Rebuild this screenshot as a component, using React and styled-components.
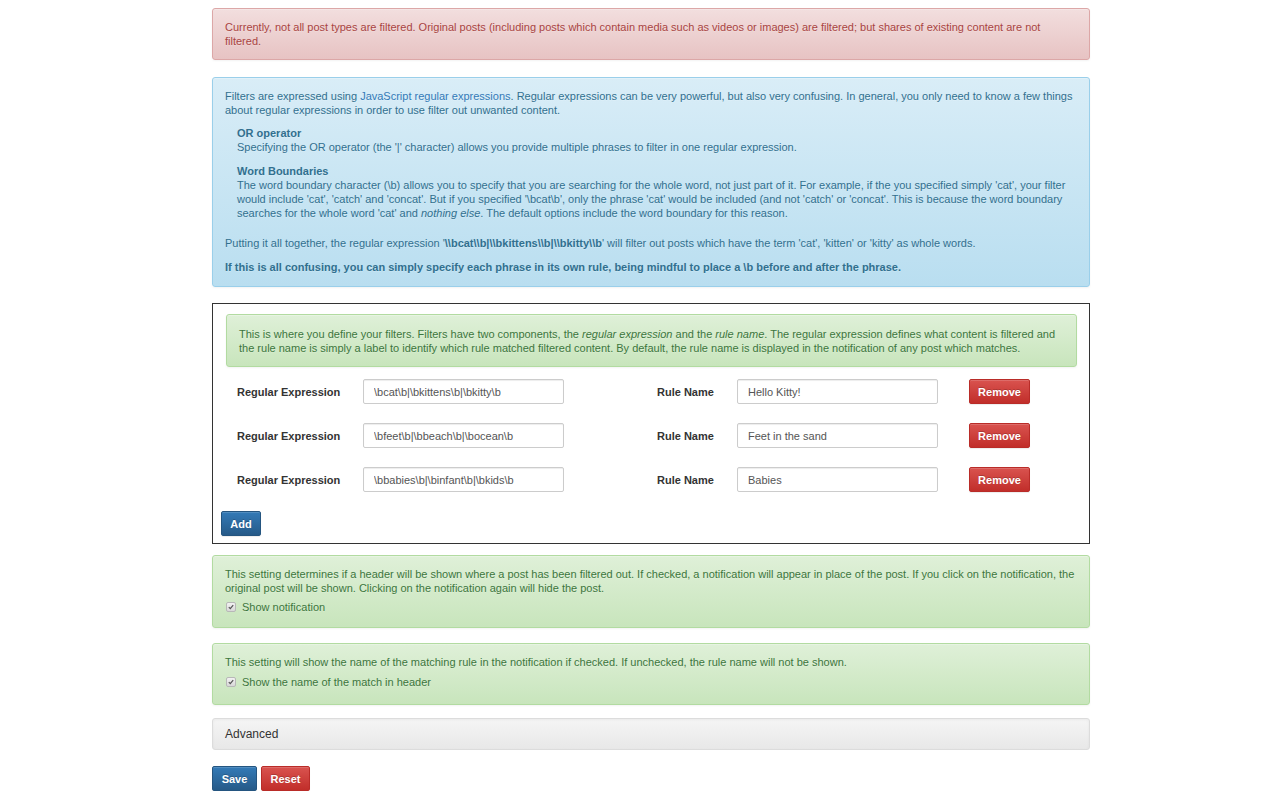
import React from "react";
import styled, { createGlobalStyle, css } from "styled-components";

const GlobalStyle = createGlobalStyle`
  html, body {
    margin: 0;
    padding: 0;
    background: #fff;
  }
  body {
    font-family: "Liberation Sans", Arial, Helvetica, sans-serif;
    font-size: 11px;
    line-height: 14px;
    color: #333;
  }
`;

const Page = styled.div`
  width: 878px;
  margin-left: 212px;
  padding-top: 8px;
`;

const tones = {
  danger: css`
    color: #a94442;
    background-image: linear-gradient(to bottom, #f2dede 0%, #e7c3c3 100%);
    border-color: #dca7a7;
  `,
  info: css`
    color: #31708f;
    background-image: linear-gradient(to bottom, #d9edf7 0%, #b9def0 100%);
    border-color: #9acfea;
  `,
  success: css`
    color: #3c763d;
    background-image: linear-gradient(to bottom, #dff0d8 0%, #c8e5bc 100%);
    border-color: #b2dba1;
  `,
};

const Alert = styled.div`
  border: 1px solid;
  border-radius: 3px;
  padding: ${(p) => p.$pad || "11px 12px 12px"};
  margin-bottom: ${(p) => p.$mb || 0}px;
  box-shadow: inset 0 1px 0 rgba(255, 255, 255, 0.25), 0 1px 2px rgba(0, 0, 0, 0.05);
  text-shadow: 0 1px 0 rgba(255, 255, 255, 0.2);
  ${(p) => tones[p.$tone]}
`;

const IntroAlert = styled(Alert)`
  margin-left: 5px;
`;

const Para = styled.p`
  margin: 0 0 ${(p) => p.$mb || 0}px;
  font-weight: ${(p) => (p.$bold ? "bold" : "normal")};
`;

const Link = styled.a`
  color: #337ab7;
  text-decoration: none;
`;

const Terms = styled.dl`
  margin: 9px 0 16px;
  padding-left: 12px;
`;

const Term = styled.dt`
  font-weight: bold;
  font-size: 11px;
`;

const Desc = styled.dd`
  margin: 0 0 ${(p) => p.$mb || 0}px;
`;

const Code = styled.b`
  font-weight: bold;
`;

const RulesBox = styled.div`
  border: 1px solid #333;
  padding: 10px 12px 7px 8px;
  margin-bottom: 11px;
`;

const Rows = styled.div`
  padding: 12px 0 19px 16px;
  display: flex;
  flex-direction: column;
  gap: 19px;
`;

const Row = styled.div`
  display: grid;
  grid-template-columns: 126px 201px 93px 80px 201px 31px 61px;
  align-items: center;
  height: 25px;
`;

const Label = styled.label`
  font-weight: bold;
  color: #333;
`;

const Input = styled.input`
  box-sizing: border-box;
  width: 201px;
  height: 25px;
  padding: 0 10px;
  font-family: inherit;
  font-size: 11px;
  color: #555;
  border: 1px solid #ccc;
  border-radius: 2px;
  box-shadow: inset 0 1px 1px rgba(0, 0, 0, 0.075);
  background: #fff;
  outline: none;
`;

const btnTones = {
  primary: css`
    background-image: linear-gradient(to bottom, #337ab7 0%, #265a88 100%);
    border-color: #245580;
  `,
  danger: css`
    background-image: linear-gradient(to bottom, #d9534f 0%, #c12e2a 100%);
    border-color: #b92c28;
  `,
};

const Button = styled.button`
  box-sizing: border-box;
  height: 25px;
  width: ${(p) => p.$w}px;
  padding: 0;
  font-family: inherit;
  font-size: 11px;
  font-weight: bold;
  color: #fff;
  border: 1px solid;
  border-radius: 2px;
  text-shadow: 0 -1px 0 rgba(0, 0, 0, 0.2);
  box-shadow: inset 0 1px 0 rgba(255, 255, 255, 0.15), 0 1px 1px rgba(0, 0, 0, 0.075);
  cursor: pointer;
  ${(p) => btnTones[p.$tone]}
`;

const CheckRow = styled.label`
  display: flex;
  align-items: center;
  gap: 6px;
  margin-top: ${(p) => p.$mt}px;
  padding-left: 1px;
`;

const Box = styled.span`
  width: 8px;
  height: 8px;
  border: 1px solid #b8b8b8;
  border-radius: 2px;
  background: linear-gradient(to bottom, #f2f2f2, #d8d8d8);
  display: flex;
  align-items: center;
  justify-content: center;
`;

const Well = styled.div`
  height: 30px;
  display: flex;
  align-items: center;
  padding: 0 12px;
  font-size: 12px;
  color: #333;
  border: 1px solid #dcdcdc;
  border-radius: 3px;
  background-image: linear-gradient(to bottom, #f5f5f5 0%, #e8e8e8 100%);
  box-shadow: inset 0 1px 3px rgba(0, 0, 0, 0.05), 0 1px 0 rgba(255, 255, 255, 0.1);
  margin-bottom: 16px;
`;

const Actions = styled.div`
  display: flex;
  gap: 4px;
`;

const rules = [
  { re: "\\bcat\\b|\\bkittens\\b|\\bkitty\\b", name: "Hello Kitty!" },
  { re: "\\bfeet\\b|\\bbeach\\b|\\bocean\\b", name: "Feet in the sand" },
  { re: "\\bbabies\\b|\\binfant\\b|\\bkids\\b", name: "Babies" },
];

function Check({ children, mt }) {
  return (
    <CheckRow $mt={mt}>
      <Box>
        <svg width="6" height="6" viewBox="0 0 6 6">
          <path d="M0.8 3.2 L2.3 4.7 L5.2 1.2" stroke="#555" strokeWidth="1.2" fill="none" />
        </svg>
      </Box>
      {children}
    </CheckRow>
  );
}

export default function App() {
  return (
    <>
      <GlobalStyle />
      <Page>
        <Alert $tone="danger" $mb={17} $pad="11px 12px 11px">
          Currently, not all post types are filtered. Original posts (including posts which contain media such as
          videos or images) are filtered; but shares of existing content are not filtered.
        </Alert>

        <Alert $tone="info" $mb={16}>
          <Para>
            Filters are expressed using <Link href="#">JavaScript regular expressions</Link>. Regular expressions can
            be very powerful, but also very confusing. In general, you only need to know a few things about regular
            expressions in order to use filter out unwanted content.
          </Para>
          <Terms>
            <Term>OR operator</Term>
            <Desc $mb={10}>
              Specifying the OR operator (the '|' character) allows you provide multiple phrases to filter in one
              regular expression.
            </Desc>
            <Term>Word Boundaries</Term>
            <Desc>
              The word boundary character (\b) allows you to specify that you are searching for the whole word, not
              just part of it. For example, if the you specified simply 'cat', your filter would include 'cat',
              'catch' and 'concat'. But if you specified '\bcat\b', only the phrase 'cat' would be included (and not
              'catch' or 'concat'. This is because the word boundary searches for the whole word 'cat' and{" "}
              <i>nothing else</i>. The default options include the word boundary for this reason.
            </Desc>
          </Terms>
          <Para $mb={10}>
            Putting it all together, the regular expression '<Code>\\bcat\\b|\\bkittens\\b|\\bkitty\\b</Code>' will
            filter out posts which have the term 'cat', 'kitten' or 'kitty' as whole words.
          </Para>
          <Para $bold>
            If this is all confusing, you can simply specify each phrase in its own rule, being mindful to place a \b
            before and after the phrase.
          </Para>
        </Alert>

        <RulesBox>
          <IntroAlert $tone="success" $pad="12px 12px 11px">
            This is where you define your filters. Filters have two components, the <i>regular expression</i> and the{" "}
            <i>rule name</i>. The regular expression defines what content is filtered and the rule name is simply a
            label to identify which rule matched filtered content. By default, the rule name is displayed in the
            notification of any post which matches.
          </IntroAlert>
          <Rows>
            {rules.map((r, i) => (
              <Row key={i}>
                <Label>Regular Expression</Label>
                <Input defaultValue={r.re} />
                <span />
                <Label>Rule Name</Label>
                <Input defaultValue={r.name} />
                <span />
                <Button $tone="danger" $w={61}>
                  Remove
                </Button>
              </Row>
            ))}
          </Rows>
          <Button $tone="primary" $w={40}>
            Add
          </Button>
        </RulesBox>

        <Alert $tone="success" $mb={15} $pad="11px 12px 13px">
          This setting determines if a header will be shown where a post has been filtered out. If checked, a
          notification will appear in place of the post. If you click on the notification, the original post will be
          shown. Clicking on the notification again will hide the post.
          <Check mt={5}>Show notification</Check>
        </Alert>

        <Alert $tone="success" $mb={13} $pad="11px 12px 15px">
          This setting will show the name of the matching rule in the notification if checked. If unchecked, the rule
          name will not be shown.
          <Check mt={6}>Show the name of the match in header</Check>
        </Alert>

        <Well>Advanced</Well>

        <Actions>
          <Button $tone="primary" $w={45}>
            Save
          </Button>
          <Button $tone="danger" $w={49}>
            Reset
          </Button>
        </Actions>
      </Page>
    </>
  );
}
